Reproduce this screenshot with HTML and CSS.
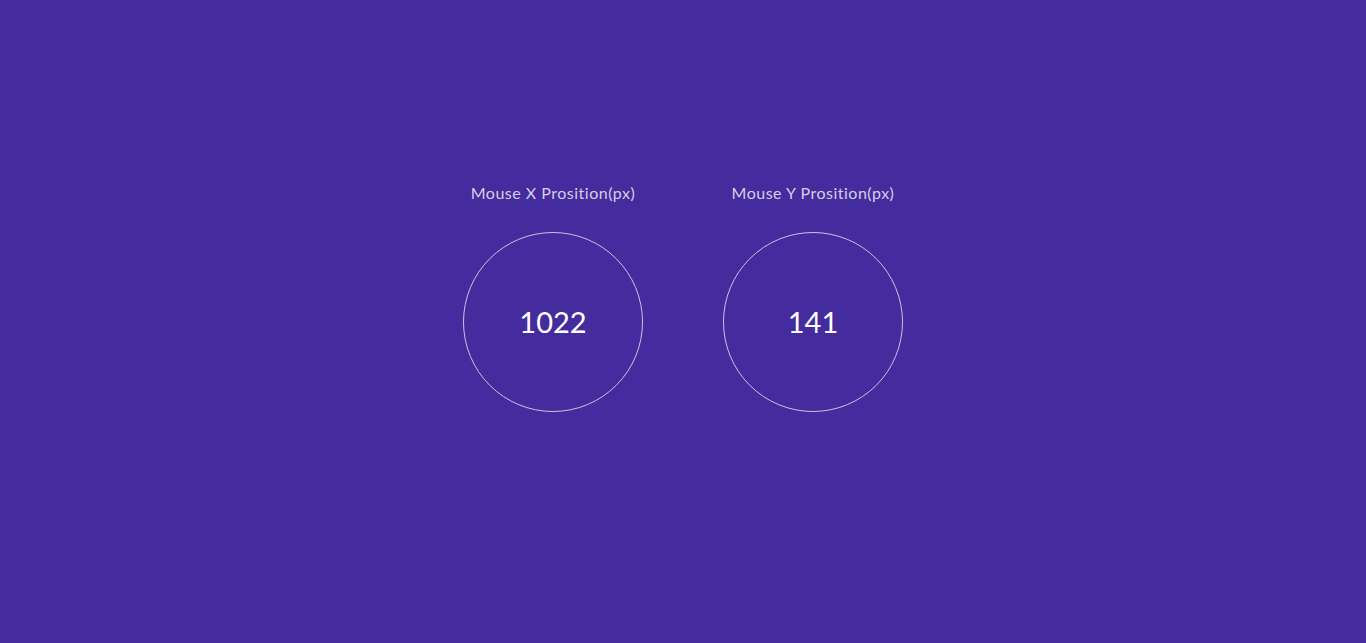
FILE: index.html
```html
<!DOCTYPE html>
<html>
<head>
<meta charset="utf-8">
<link rel="stylesheet" href="styles.css">
</head>
<body>
<main class="stage">
  <section class="readout">
    <div class="label">Mouse X Prosition(px)</div>
    <div class="circle">1022</div>
  </section>
  <section class="readout">
    <div class="label">Mouse Y Prosition(px)</div>
    <div class="circle">141</div>
  </section>
</main>
</body>
</html>
```
FILE: styles.css
```css
html, body {
  margin: 0;
  padding: 0;
}
body {
  background: #442b9e;
  font-family: "Comic Sans MS", "Lato", "Noto Sans", sans-serif;
  height: 643px;
  overflow: hidden;
}
.stage {
  height: 643px;
  display: flex;
  justify-content: center;
  align-items: center;
  gap: 80px;
}
.readout {
  display: flex;
  flex-direction: column;
  align-items: center;
  padding-bottom: 49px;
}
.label {
  color: #d4cfe6;
  font-size: 16px;
  letter-spacing: 0.5px;
  line-height: 20px;
  height: 20px;
  margin-bottom: 29px;
  white-space: nowrap;
}
.circle {
  width: 178px;
  height: 178px;
  border: 1px solid #cbc3e4;
  border-radius: 50%;
  display: flex;
  align-items: center;
  justify-content: center;
  color: #ffffff;
  font-size: 29px;
}
```
